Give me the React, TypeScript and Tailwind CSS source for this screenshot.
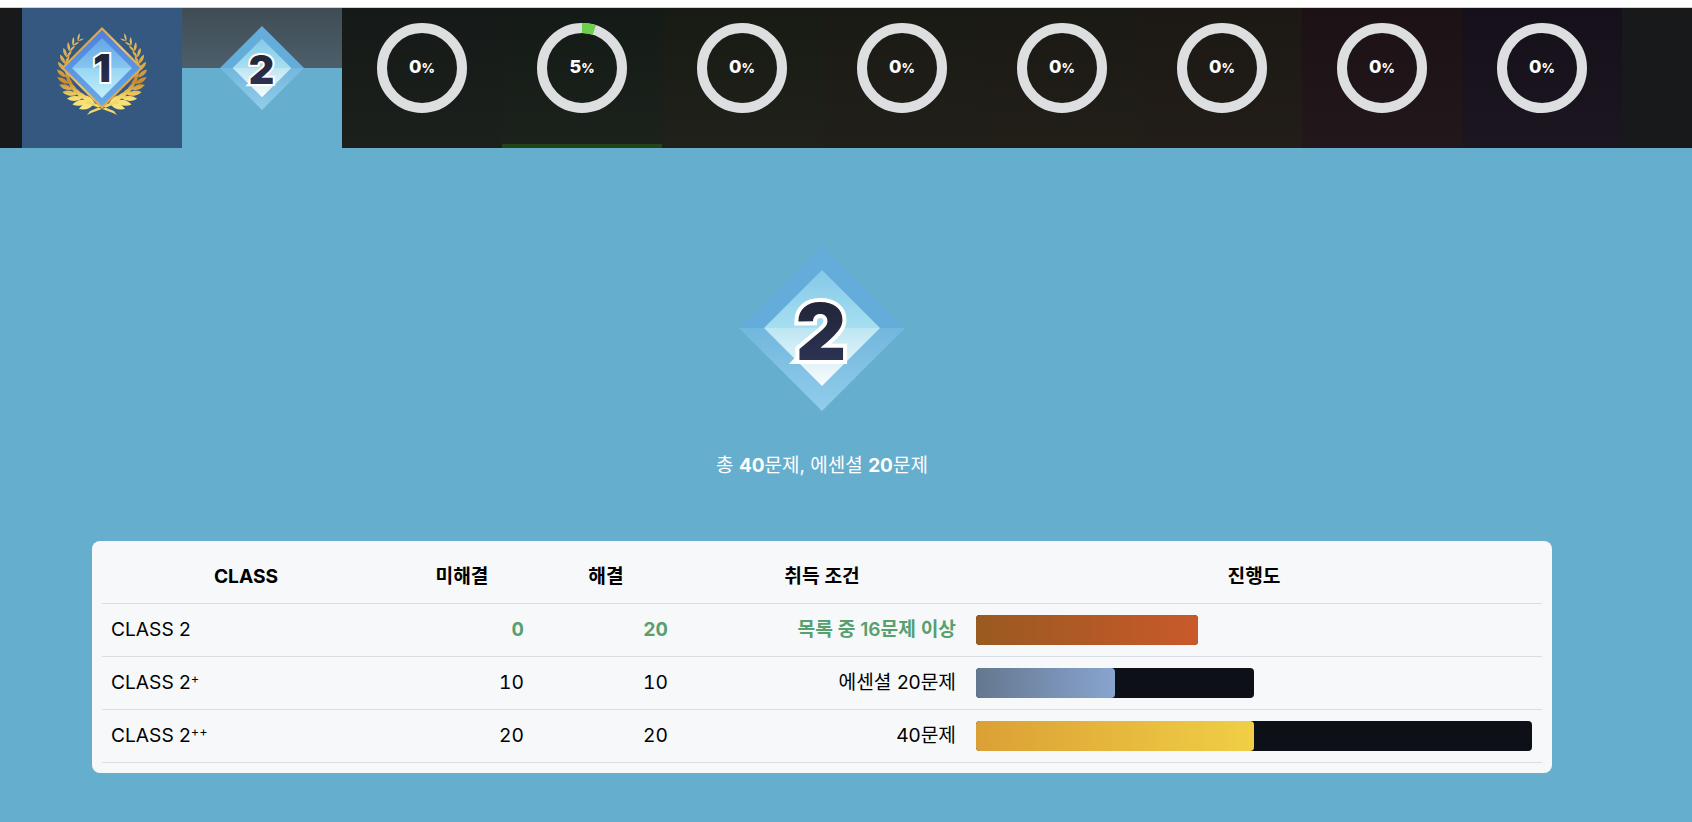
const FONT = "font-['Inter','Noto_Sans_CJK_KR',sans-serif]";

const RINGS = [
  { percent: 0, bg: "bg-[linear-gradient(to_bottom,#151a18,#1b201c)]" },
  { percent: 5, bg: "bg-[linear-gradient(to_bottom,#141a15,#1b211b)]" },
  { percent: 0, bg: "bg-[linear-gradient(to_bottom,#181a14,#20211b)]" },
  { percent: 0, bg: "bg-[linear-gradient(to_bottom,#1a1a14,#211f1a)]" },
  { percent: 0, bg: "bg-[linear-gradient(to_bottom,#1b1914,#221f19)]" },
  { percent: 0, bg: "bg-[linear-gradient(to_bottom,#1c1814,#221d18)]" },
  { percent: 0, bg: "bg-[linear-gradient(to_bottom,#1c1216,#22181c)]" },
  { percent: 0, bg: "bg-[linear-gradient(to_bottom,#151019,#1b1620)]" },
];

const ROWS = [
  {
    name: "CLASS 2",
    sup: "",
    unsolved: 0,
    solved: 20,
    condition: "목록 중 16문제 이상",
    done: true,
    trackWidth: 222,
    fillWidth: 222,
    fill: "bg-[linear-gradient(to_right,#995a20,#c9592a)]",
  },
  {
    name: "CLASS 2",
    sup: "+",
    unsolved: 10,
    solved: 10,
    condition: "에센셜 20문제",
    done: false,
    trackWidth: 278,
    fillWidth: 139,
    fill: "bg-[linear-gradient(to_right,#64778f,#88a4cf)]",
  },
  {
    name: "CLASS 2",
    sup: "++",
    unsolved: 20,
    solved: 20,
    condition: "40문제",
    done: false,
    trackWidth: 556,
    fillWidth: 278,
    fill: "bg-[linear-gradient(to_right,#dba035,#f0cf45)]",
  },
];

function Digit({ value, x, y, size, id, outline }: { value: string; x: number; y: number; size: number; id: string; outline: number }) {
  return (
    <text
      x={x}
      y={y}
      textAnchor="middle"
      fontFamily="Inter, sans-serif"
      fontWeight={900}
      fontSize={size}
      fill={`url(#${id})`}
      stroke="#ffffff"
      strokeWidth={outline}
      strokeLinejoin="miter"
      paintOrder="stroke"
    >
      {value}
    </text>
  );
}

function DiamondTwo({ size, id }: { size: number; id: string }) {
  return (
    <svg width={size} height={size} viewBox="-83 -83 166 166">
      <defs>
        <linearGradient id={`${id}-outer`} x1="0" y1="0" x2="0" y2="1">
          <stop offset="0" stopColor="#64acd9" />
          <stop offset="0.5" stopColor="#64acd9" />
          <stop offset="0.5" stopColor="#72b7de" />
          <stop offset="1" stopColor="#92cdea" />
        </linearGradient>
        <linearGradient id={`${id}-inner`} x1="0" y1="0" x2="0" y2="1">
          <stop offset="0" stopColor="#86c8e8" />
          <stop offset="0.5" stopColor="#a6dff1" />
          <stop offset="0.5" stopColor="#bde6f3" />
          <stop offset="1" stopColor="#f8fbfd" />
        </linearGradient>
        <linearGradient id={`${id}-digit`} x1="0" y1="0" x2="0" y2="1">
          <stop offset="0" stopColor="#1e2231" />
          <stop offset="1" stopColor="#2f365a" />
        </linearGradient>
      </defs>
      <polygon points="0,-83 83,0 0,83 -83,0" fill={`url(#${id}-outer)`} />
      <polygon points="0,-58 58,0 0,58 -58,0" fill={`url(#${id}-inner)`} />
      {/* pointed tail of the outline, bottom left of the digit */}
      <polygon points="-33,36 -20,36 -20,22" fill="#ffffff" />
      <Digit value="2" x={-1} y={32} size={78} id={`${id}-digit`} outline={8} />
    </svg>
  );
}

function leafPath(x: number, y: number, angle: number, length: number, width: number) {
  const dx = Math.cos(angle);
  const dy = Math.sin(angle);
  const mx = x + dx * length * 0.5;
  const my = y + dy * length * 0.5;
  const ex = x + dx * length;
  const ey = y + dy * length;
  return `M${x} ${y}Q${mx - dy * width} ${my + dx * width} ${ex} ${ey}Q${mx + dy * width} ${my - dx * width} ${x} ${y}Z`;
}

// one side of the wreath, mirrored for the other
function laurelLeaves() {
  const leaves: string[] = [];
  for (let i = 0; i < 13; i++) {
    const phi = ((168 - i * 10.5) * Math.PI) / 180;
    const radius = 35 + Math.sin(phi) * 2;
    const x = radius * Math.sin(phi);
    const y = -radius * Math.cos(phi);
    const tangent = Math.atan2(-Math.sin(phi), -Math.cos(phi));
    const t = i / 12;
    const length = 17 - t * 9;
    const width = 6 - t * 4;
    leaves.push(leafPath(x, y, tangent + 0.6, length, width));
    leaves.push(leafPath(x, y, tangent - 0.35, length * 0.85, width * 0.8));
  }
  return leaves.join("");
}

function DiamondOne({ size }: { size: number }) {
  const leaves = laurelLeaves();
  return (
    <svg width={size} height={size} viewBox="-50 -50 100 100">
      <defs>
        <linearGradient id="laurel" gradientUnits="userSpaceOnUse" x1="0" y1="-38" x2="0" y2="46">
          <stop offset="0" stopColor="#e2c36c" />
          <stop offset="0.45" stopColor="#d9a647" />
          <stop offset="0.62" stopColor="#c98a30" />
          <stop offset="0.82" stopColor="#f7df72" />
          <stop offset="1" stopColor="#fbe983" />
        </linearGradient>
        <linearGradient id="frame" x1="0" y1="0" x2="1" y2="1">
          <stop offset="0" stopColor="#c9862f" />
          <stop offset="0.5" stopColor="#eec96a" />
          <stop offset="1" stopColor="#c98a30" />
        </linearGradient>
        <linearGradient id="one-outer" x1="0" y1="0" x2="0" y2="1">
          <stop offset="0" stopColor="#4f80dc" />
          <stop offset="1" stopColor="#67aae8" />
        </linearGradient>
        <linearGradient id="one-inner" x1="0" y1="0" x2="0" y2="1">
          <stop offset="0" stopColor="#65a6e6" />
          <stop offset="0.5" stopColor="#86c6ef" />
          <stop offset="0.5" stopColor="#97d5f3" />
          <stop offset="1" stopColor="#c3f0fa" />
        </linearGradient>
        <linearGradient id="one-digit" x1="0" y1="0" x2="0" y2="1">
          <stop offset="0" stopColor="#1c2030" />
          <stop offset="1" stopColor="#2c3356" />
        </linearGradient>
      </defs>
      <path d={leaves} fill="url(#laurel)" />
      <path d={leaves} fill="url(#laurel)" transform="scale(-1 1)" />
      <path d="M-15 47L-12 43L15 32L16 35L-11 45Z M15 47L12 43L-15 32L-16 35L11 45Z" fill="#f4d768" />
      <polygon points="0,-41 41,0 0,41 -41,0" fill="url(#frame)" />
      <polygon points="0,-38 38,0 0,38 -38,0" fill="url(#one-outer)" />
      <polygon points="0,-30 30,0 0,30 -30,0" fill="url(#one-inner)" />
      <Digit value="1" x={0} y={14} size={39} id="one-digit" outline={4} />
    </svg>
  );
}

function Ring({ percent }: { percent: number }) {
  const circumference = 2 * Math.PI * 40;
  return (
    <div className="grid h-[90px] place-items-center">
      <svg width={90} height={90} viewBox="0 0 90 90" className="col-start-1 row-start-1">
        <circle cx={45} cy={45} r={40} fill="none" stroke="#dcdee0" strokeWidth={10} />
        {percent > 0 && (
          <circle
            cx={45}
            cy={45}
            r={40}
            fill="none"
            stroke="#6bd04a"
            strokeWidth={10}
            strokeDasharray={`${(circumference * percent) / 100} ${circumference}`}
            transform="rotate(-90 45 45)"
          />
        )}
      </svg>
      <div className="col-start-1 row-start-1 -mt-[3px] font-extrabold text-white leading-none">
        <span className="text-[18px]">{percent}</span>
        <span className="text-[13px]">%</span>
      </div>
    </div>
  );
}

export default function App() {
  return (
    <div className={`min-h-screen bg-[#66aece] ${FONT}`}>
      <div className="h-2 bg-white border-b border-[#d0d3d6]" />
      <nav className="flex h-[140px] items-start pl-[22px] bg-[#18191a]">
        <div className="flex h-full w-[160px] items-start justify-center pt-[10px] bg-[#34587f]">
          <DiamondOne size={100} />
        </div>
        <div className="flex h-full w-[160px] items-start justify-center pt-[18px] bg-[#66aece] bg-[linear-gradient(to_bottom,#3f4c54,#4c5f6b_43%,transparent_43%)]">
          <DiamondTwo size={84} id="small" />
        </div>
        {RINGS.map((ring, i) => (
          <div key={i} className={`flex h-full w-[160px] items-start justify-center pt-[15px] ${ring.bg} ${ring.percent > 0 ? "border-b-4 border-[#234418]" : ""}`}>
            <Ring percent={ring.percent} />
          </div>
        ))}
      </nav>
      <main className="flex w-[1644px] flex-col items-center px-[92px] pt-[97px] pb-[50px]">
        <DiamondTwo size={166} id="large" />
        <p className="mt-[41px] text-[19px] leading-[28px] text-white">
          총 <b>40</b>문제, 에센셜 <b>20</b>문제
        </p>
        <div className="mt-[61px] w-full rounded-lg bg-[#f6f8fa] p-[10px]">
          <table className="w-full table-fixed border-collapse text-[19.2px] text-black">
            <thead>
              <tr className="h-[52px] border-b border-[#d8dee4]">
                <th className="w-[20%] font-bold">CLASS</th>
                <th className="w-[10%] font-semibold">미해결</th>
                <th className="w-[10%] font-semibold">해결</th>
                <th className="w-[20%] font-semibold">취득 조건</th>
                <th className="w-[40%] font-semibold">진행도</th>
              </tr>
            </thead>
            <tbody>
              {ROWS.map((row) => (
                <tr key={row.name + row.sup} className="h-[53px] border-b border-[#d8dee4]">
                  <td className="pl-[9px] pr-[10px]">
                    {row.name}
                    {row.sup && <sup className="text-[12.8px]">{row.sup}</sup>}
                  </td>
                  <td className={`px-[10px] text-right tabular-nums ${row.done ? "font-bold text-[#57a06f]" : ""}`}>{row.unsolved}</td>
                  <td className={`px-[10px] text-right tabular-nums ${row.done ? "font-bold text-[#57a06f]" : ""}`}>{row.solved}</td>
                  <td className={`px-[10px] text-right ${row.done ? "font-semibold text-[#57a06f]" : ""}`}>{row.condition}</td>
                  <td className="px-[10px]">
                    <div className="h-[30px] rounded bg-[#0d1117]" style={{ width: row.trackWidth }}>
                      <div className={`h-full rounded ${row.fill}`} style={{ width: row.fillWidth }} />
                    </div>
                  </td>
                </tr>
              ))}
            </tbody>
          </table>
        </div>
      </main>
    </div>
  );
}
